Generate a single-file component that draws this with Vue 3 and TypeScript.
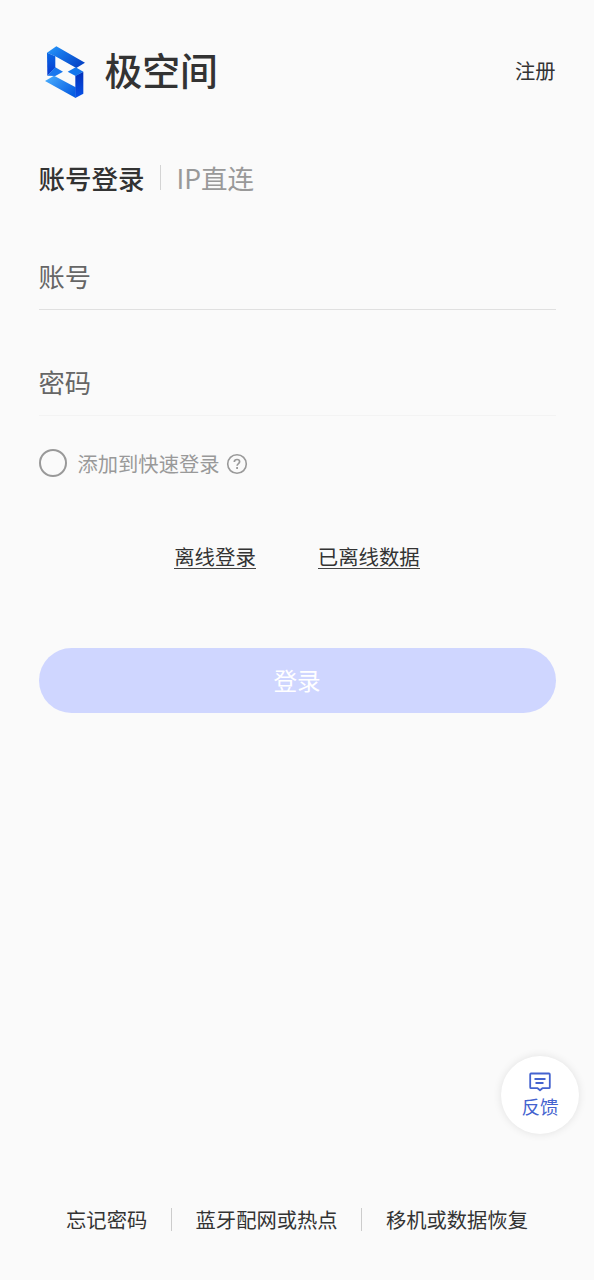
<script setup lang="ts">
import { ref } from 'vue'

const tabs: string[] = ['账号登录', 'IP直连']
const activeTab = ref(0)
const account = ref('')
const password = ref('')
const quickLogin = ref(false)
const footerLinks: string[] = ['忘记密码', '蓝牙配网或热点', '移机或数据恢复']
</script>

<template>
  <main class="page">
    <header class="header">
      <div class="brand">
        <svg class="logo" viewBox="33 28 120 157" aria-hidden="true">
          <defs>
            <linearGradient id="topFace" x1="0" y1="0" x2="1" y2="0.6">
              <stop offset="0" stop-color="#2a9bfb" />
              <stop offset="0.4" stop-color="#1677ea" />
              <stop offset="1" stop-color="#0746c8" />
            </linearGradient>
            <linearGradient id="leftFace" x1="0" y1="0" x2="0" y2="1">
              <stop offset="0" stop-color="#0968e5" />
              <stop offset="1" stop-color="#0839cf" />
            </linearGradient>
            <linearGradient id="bottomFace" x1="0" y1="0" x2="1" y2="0.7">
              <stop offset="0" stop-color="#4cb1ff" />
              <stop offset="1" stop-color="#075ee2" />
            </linearGradient>
            <linearGradient id="rightFace" x1="0" y1="0" x2="0" y2="1">
              <stop offset="0" stop-color="#032fb9" />
              <stop offset="1" stop-color="#0753e9" />
            </linearGradient>
          </defs>
          <path fill="url(#topFace)" d="M39 48 67 29 153 78 127 94 64 59Z" />
          <path fill="url(#leftFace)" d="M39 48 64 59V93L40 117Z" />
          <path fill="#1977ee" d="M40 117 64 92 87 105 64 118Z" />
          <path fill="url(#bottomFace)" d="M33 133 60 117 125 152V184Z" />
          <path fill="url(#rightFace)" d="M124 117 148 105V171L124 184Z" />
          <path fill="#1476ec" d="M101 105 125 92 148 105 125 118Z" />
        </svg>
        <h1 class="name">极空间</h1>
      </div>
      <a class="register">注册</a>
    </header>

    <nav class="tabs">
      <template v-for="(tab, i) in tabs" :key="tab">
        <i v-if="i > 0" class="tab-divider"></i>
        <button class="tab" :class="{ active: activeTab === i }" @click="activeTab = i">{{ tab }}</button>
      </template>
    </nav>

    <form class="form" @submit.prevent>
      <input v-model="account" class="field" type="text" placeholder="账号" />
      <input v-model="password" class="field faint" type="password" placeholder="密码" />

      <div class="quick">
        <button type="button" class="radio" :class="{ checked: quickLogin }" aria-label="添加到快速登录" @click="quickLogin = !quickLogin"></button>
        <span class="quick-text">添加到快速登录</span>
        <svg class="help" viewBox="0 0 22 22" fill="none" stroke="#999" aria-hidden="true">
          <circle cx="11" cy="11" r="9.3" stroke-width="1.6" />
          <path d="M8.3 9C8.3 7.3 9.4 6.5 11 6.5S13.6 7.4 13.6 8.8C13.6 10.6 11.1 10.6 11.1 12.8" stroke-width="1.7" />
          <path d="M11.1 14.1V16" stroke-width="1.8" />
        </svg>
      </div>

      <div class="offline">
        <a class="offline-link">离线登录</a>
        <a class="offline-link">已离线数据</a>
      </div>

      <button class="submit" type="submit">登录</button>
    </form>

    <footer class="footer">
      <template v-for="(link, i) in footerLinks" :key="link">
        <i v-if="i > 0" class="footer-divider"></i>
        <a class="footer-link">{{ link }}</a>
      </template>
    </footer>

    <button class="feedback">
      <svg class="chat" viewBox="0 0 22 20" fill="none" stroke="#4463cf" stroke-width="1.8" stroke-linejoin="round" aria-hidden="true">
        <path d="M2 1.5H20Q20.8 1.5 20.8 2.5V15.2Q20.8 16.2 20 16.2H13.4L11 18.2 8.6 16.2H2Q1.2 16.2 1.2 15.2V2.5Q1.2 1.5 2 1.5Z" />
        <path d="M5.5 7H16.5M6.5 11H14.5" />
      </svg>
      <span>反馈</span>
    </button>
  </main>
</template>

<style>
html,
body {
  margin: 0;
  background: #fafafa;
}
</style>

<style scoped>
.page {
  position: relative;
  box-sizing: border-box;
  display: flex;
  flex-direction: column;
  width: 594px;
  height: 1280px;
  padding: 44px 38.5px 0;
  overflow: hidden;
  background: #fafafa;
  color: #333;
  font-family: "Noto Sans CJK SC", sans-serif;
  font-size: 20.3px;
}

button,
input {
  box-sizing: border-box;
  margin: 0;
  padding: 0;
  border: 0;
  outline: 0;
  background: none;
  color: inherit;
  font-family: inherit;
}

.header {
  display: flex;
  align-items: center;
  justify-content: space-between;
  height: 54px;
}

.brand {
  display: flex;
  align-items: center;
}

.logo {
  width: 40px;
  height: 52.3px;
  margin: 1.7px 0 0 6px;
}

.name {
  margin: 0 0 4px 20px;
  font-size: 37.8px;
  font-weight: 500;
  line-height: 50px;
}

.register {
  padding-bottom: 1px;
  line-height: 29px;
}

.tabs {
  display: flex;
  align-items: center;
  height: 38px;
  margin-top: 61px;
}

.tab {
  color: #999;
  font-size: 26.5px;
  line-height: 38px;
}

.tab.active {
  color: #333;
  font-weight: 500;
}

.tab-divider {
  width: 1px;
  height: 25px;
  margin: 0 16px 2px 15px;
  background: #d4d4d4;
}

.form {
  display: flex;
  flex-direction: column;
  margin-top: 48px;
}

.field {
  width: 100%;
  height: 65px;
  padding-bottom: 4px;
  border-bottom: 1px solid #e0e0e0;
  font-size: 26.3px;
}

.field::placeholder {
  color: #666;
  opacity: 1;
}

.field.faint {
  margin-top: 41px;
  border-bottom-color: #f3f3f3;
}

.quick {
  display: flex;
  align-items: center;
  height: 30px;
  margin-top: 32px;
  color: #999;
}

.radio {
  width: 28px;
  height: 28px;
  border: 2px solid #999;
  border-radius: 50%;
}

.radio.checked {
  border-width: 8px;
  border-color: #4463cf;
}

.quick-text {
  margin-left: 11px;
}

.help {
  width: 22px;
  height: 22px;
  margin: 2px 0 0 6.5px;
}

.offline {
  display: flex;
  justify-content: center;
  gap: 62px;
  margin-top: 64px;
}

.offline-link {
  height: 26px;
  border-bottom: 1.5px solid #444;
  font-size: 20.4px;
  line-height: 29px;
}

.submit {
  height: 65px;
  margin-top: 79px;
  padding-bottom: 1px;
  border-radius: 33px;
  background: #cfd6ff;
  color: #fff;
  font-size: 23.6px;
}

.footer {
  display: flex;
  align-items: center;
  justify-content: center;
  height: 29px;
  margin-top: 492px;
}

.footer-link {
  padding-bottom: 2px;
}

.footer-divider {
  width: 1px;
  height: 23px;
  margin: 0 23.7px 1px;
  background: #ccc;
}

.feedback {
  position: absolute;
  top: 1055.5px;
  left: 501px;
  display: flex;
  flex-direction: column;
  align-items: center;
  width: 78px;
  height: 78px;
  padding-top: 16px;
  border-radius: 50%;
  background: #fff;
  box-shadow: 0 0 8px rgba(0, 0, 0, 0.1);
  color: #4463cf;
  font-size: 18.6px;
  line-height: 27px;
}

.chat {
  width: 22px;
  height: 20px;
}
</style>
